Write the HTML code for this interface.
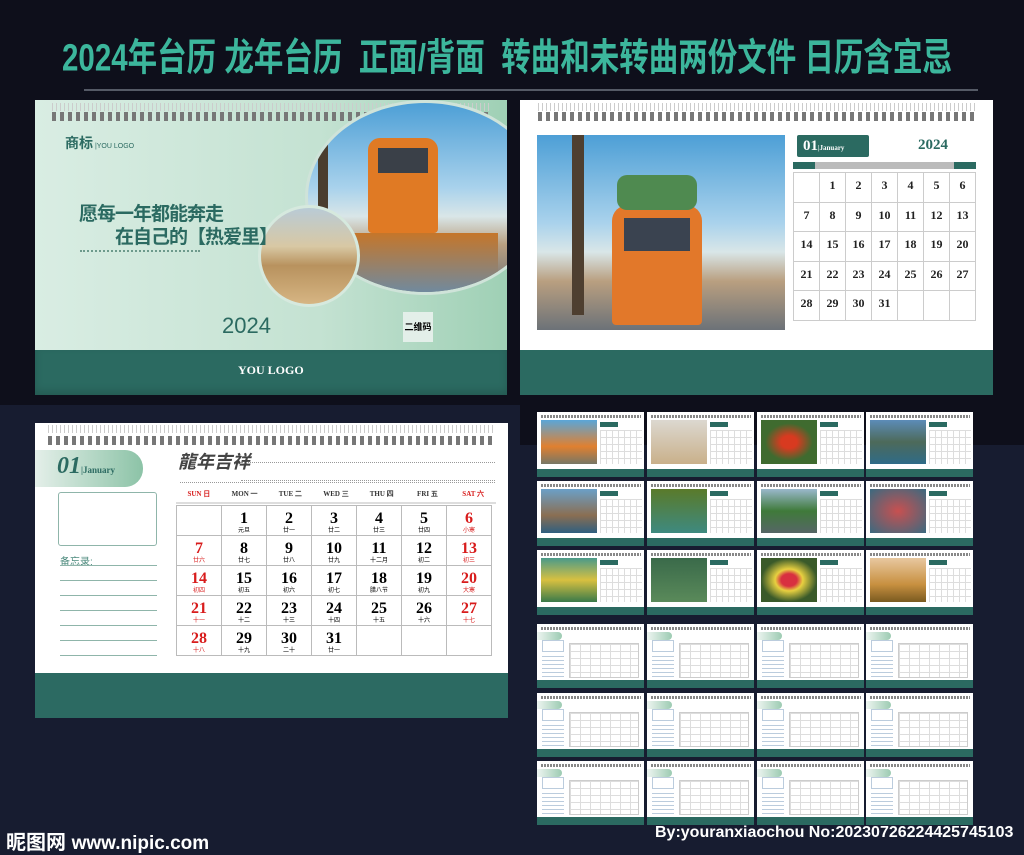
<!DOCTYPE html>
<html><head><meta charset="utf-8">
<style>
*{margin:0;padding:0;box-sizing:border-box}
body{width:1024px;height:854px;overflow:hidden;background:#171c30;font-family:"Liberation Sans","Noto Sans CJK SC",sans-serif;position:relative}
.abs{position:absolute}
.top{left:0;top:0;width:1024px;height:405px;background:#0e0f1b}
.top2{left:520px;top:405px;width:504px;height:40px;background:#0e0f1b}
.title{left:62px;top:38px;font-size:29.5px;line-height:32px;color:#3cb69c;font-weight:bold;white-space:nowrap;transform:scaleY(1.3);transform-origin:left top}
.rule{left:84px;top:89px;width:894px;height:2px;background:#555a66}
.card{position:absolute;background:#fff;overflow:hidden}
.band{position:absolute;left:0;right:0;bottom:0;background:#2b6a61}
.rings{position:absolute;height:9px;background:repeating-linear-gradient(90deg,#777 0 4px,transparent 4px 8px)}
.ringl{position:absolute;height:8px;background:repeating-linear-gradient(90deg,#ccc 0 1px,transparent 1px 4px,#ccc 4px 5px,transparent 5px 8px)}
.sky{background:linear-gradient(180deg,#4d9fd6 0%,#a9d2ec 45%,#d9e6e8 60%,#b99f80 75%,#6c7278 100%)}
table{border-collapse:collapse}
.big td{border:1px solid #bbb;width:45px;height:30px;text-align:center;font-family:"Liberation Serif","Noto Serif CJK SC",serif;font-weight:bold;font-size:16px;line-height:15px;vertical-align:middle;padding-top:2px}
.big td small{display:block;font-size:6px;line-height:7px;font-family:"Noto Sans CJK SC",sans-serif;font-weight:normal}
.r{color:#d81c1c}
.sm td{border:1px solid #ccc;width:26px;height:29.5px;text-align:center;font-family:"Liberation Serif",serif;font-weight:bold;font-size:12px;vertical-align:top;padding-top:5px;color:#222}
.o{color:#c98a2c}
.th{position:absolute;width:107px;height:60px;background:#fff;overflow:hidden}
.foot{color:#fff;font-weight:bold;white-space:nowrap}
</style></head><body>
<div class="abs top"></div><div class="abs top2"></div>
<div class="abs title">2024年台历 龙年台历&nbsp; 正面/背面&nbsp; 转曲和未转曲两份文件 日历含宜忌</div>
<div class="abs rule"></div>

<div class="card" style="left:35px;top:100px;width:472px;height:295px;background:linear-gradient(90deg,#d9ede3,#c4e2d2 60%,#9fd0b5)">
 <div class="ringl" style="left:17px;top:3px;width:440px"></div>
 <div class="rings" style="left:17px;top:12px;width:440px"></div>
 <div class="abs sky" style="left:270px;top:0;width:240px;height:195px;border-radius:50%;border:3px solid #cfe3d9;overflow:hidden">
  <div class="abs" style="left:60px;top:35px;width:70px;height:95px;background:#e07a24;border-radius:12px 12px 4px 4px"></div>
  <div class="abs" style="left:70px;top:45px;width:50px;height:25px;background:#3a4048"></div>
  <div class="abs" style="left:10px;top:0;width:10px;height:120px;background:#4a3d2e"></div>
  <div class="abs" style="left:40px;top:130px;width:150px;height:60px;background:linear-gradient(#c5762a,#6f8aa0)"></div>
 </div>
 <div class="abs" style="left:223px;top:105px;width:102px;height:102px;border-radius:50%;border:3px solid #d6e9de;background:linear-gradient(#b9cbd6,#d8c8a4 40%,#b8925e 60%,#d6b583)"></div>
 <div class="abs" style="left:30px;top:33px;font-size:14px;color:#2b6a61;font-weight:bold">商标<span style="font-size:7px;font-weight:normal"> |YOU LOGO</span></div>
 <div class="abs" style="left:44px;top:99px;font-size:19px;color:#2b6a61;font-weight:bold;letter-spacing:-1px">愿每一年都能奔走</div>
 <div class="abs" style="left:80px;top:122px;font-size:19px;color:#2b6a61;font-weight:bold;letter-spacing:-1px">在自己的【热爱里】</div>
 <div class="abs" style="left:45px;top:150px;width:120px;height:10px;border-top:2px dotted #6d9a8c"></div>
 <div class="abs" style="left:187px;top:213px;font-size:22px;color:#2b6a61">2024</div>
 <div class="abs" style="left:368px;top:212px;width:30px;height:30px;background:#e3efe9;font-size:9px;font-weight:bold;text-align:center;line-height:30px">二维码</div>
 <div class="band" style="height:45px;box-shadow:0 -4px 8px rgba(0,0,0,.15) inset"></div>
 <div class="abs" style="left:203px;top:263px;font-size:12px;color:#fff;font-family:'Liberation Serif',serif;font-weight:bold">YOU LOGO</div>
</div>

<div class="card" style="left:520px;top:100px;width:473px;height:295px">
 <div class="ringl" style="left:18px;top:3px;width:440px"></div>
 <div class="rings" style="left:18px;top:12px;width:440px"></div>
 <div class="abs sky" style="left:17px;top:35px;width:248px;height:195px;overflow:hidden">
  <div class="abs" style="left:75px;top:70px;width:90px;height:120px;background:#e2782a;border-radius:16px 16px 4px 4px"></div>
  <div class="abs" style="left:87px;top:83px;width:66px;height:33px;background:#3a4350"></div>
  <div class="abs" style="left:80px;top:40px;width:80px;height:35px;background:#4f8a50;border-radius:10px"></div>
  <div class="abs" style="left:35px;top:0;width:12px;height:180px;background:#4e3f30"></div>
 </div>
 <div class="abs" style="left:277px;top:35px;width:72px;height:22px;background:#2b6a61;color:#fff;font-family:'Liberation Serif',serif;font-weight:bold;font-size:15px;padding-left:6px;line-height:22px;border-radius:2px">01<span style="font-size:7px">|January</span></div>
 <div class="abs" style="left:398px;top:37px;font-size:15px;font-weight:bold;color:#2b6a61;font-family:'Liberation Serif',serif">2024</div>
 <div class="abs" style="left:273px;top:62px;width:183px;height:7px;background:linear-gradient(90deg,#2b6a61 12%,#bbb 12% 88%,#2b6a61 88%)"></div>
 <table class="sm abs" style="left:273px;top:72px">
  <tr><td></td><td>1</td><td>2</td><td>3</td><td>4</td><td>5</td><td class="o">6</td></tr>
  <tr><td class="o">7</td><td>8</td><td>9</td><td>10</td><td>11</td><td>12</td><td class="o">13</td></tr>
  <tr><td class="o">14</td><td>15</td><td>16</td><td>17</td><td>18</td><td>19</td><td class="o">20</td></tr>
  <tr><td class="o">21</td><td>22</td><td>23</td><td>24</td><td>25</td><td>26</td><td class="o">27</td></tr>
  <tr><td class="o">28</td><td>29</td><td>30</td><td>31</td><td></td><td></td><td></td></tr>
 </table>
 <div class="band" style="height:45px"></div>
</div>

<div class="card" style="left:35px;top:423px;width:473px;height:295px">
 <div class="ringl" style="left:13px;top:2px;width:445px"></div>
 <div class="rings" style="left:13px;top:13px;width:445px"></div>
 <div class="abs" style="left:0;top:27px;width:108px;height:37px;border-radius:0 18px 18px 0;background:linear-gradient(90deg,#e4efe9,#8cc3a7)"></div>
 <div class="abs" style="left:22px;top:30px;font-family:'Liberation Serif',serif;font-weight:bold;font-style:italic;font-size:24px;color:#2b6a61">01<span style="font-size:9px;font-style:normal">|January</span></div>
 <div class="abs" style="left:23px;top:69px;width:99px;height:54px;border:1px solid #8fb5aa;border-radius:3px"></div>
 <div class="abs" style="left:25px;top:130px;font-size:10px;color:#4c8a7d">备忘录:</div>
 <div class="abs" style="left:25px;top:142px;width:97px;height:96px;background:repeating-linear-gradient(180deg,#8fb5aa 0 1px,transparent 1px 15px)"></div>
 <div class="abs" style="left:143px;top:25px;font-size:18px;color:#444;font-weight:bold;font-style:italic">龍年吉祥</div>
 <div class="abs" style="left:206px;top:39px;width:254px;height:19px;border-top:1px dotted #999;border-bottom:1px dotted #999"></div>
 <div class="abs" style="left:145px;top:59px;width:315px;border-top:1px dotted #999"></div>
 <div class="abs" style="left:141px;top:66px;width:320px;display:flex;font-family:'Liberation Serif',serif;font-weight:bold;font-size:7px;color:#333;text-align:center">
  <span style="flex:1;color:#d81c1c">SUN 日</span><span style="flex:1">MON 一</span><span style="flex:1">TUE 二</span><span style="flex:1">WED 三</span><span style="flex:1">THU 四</span><span style="flex:1">FRI 五</span><span style="flex:1;color:#d81c1c">SAT 六</span></div>
 <div class="abs" style="left:141px;top:79px;width:320px;height:2px;background:#ddd"></div>
 <table class="big abs" style="left:141px;top:82px">
  <tr><td></td><td>1<small>元旦</small></td><td>2<small>廿一</small></td><td>3<small>廿二</small></td><td>4<small>廿三</small></td><td>5<small>廿四</small></td><td class="r">6<small>小寒</small></td></tr>
  <tr><td class="r">7<small>廿六</small></td><td>8<small>廿七</small></td><td>9<small>廿八</small></td><td>10<small>廿九</small></td><td>11<small>十二月</small></td><td>12<small>初二</small></td><td class="r">13<small>初三</small></td></tr>
  <tr><td class="r">14<small>初四</small></td><td>15<small>初五</small></td><td>16<small>初六</small></td><td>17<small>初七</small></td><td>18<small>腊八节</small></td><td>19<small>初九</small></td><td class="r">20<small>大寒</small></td></tr>
  <tr><td class="r">21<small>十一</small></td><td>22<small>十二</small></td><td>23<small>十三</small></td><td>24<small>十四</small></td><td>25<small>十五</small></td><td>26<small>十六</small></td><td class="r">27<small>十七</small></td></tr>
  <tr><td class="r">28<small>十八</small></td><td>29<small>十九</small></td><td>30<small>二十</small></td><td>31<small>廿一</small></td><td></td><td></td><td></td></tr>
 </table>
 <div class="band" style="height:45px;background:#2c6a62"></div>
</div>

<div id="thumbs"></div>
<script>
var cols=[537,647,757,866],rowsP=[412,481,550],rowsC=[624,693,761];
var imgs=['linear-gradient(#5aa6d8,#e08030 60%,#776)','linear-gradient(#dcd8d0,#c9b08a)','radial-gradient(#d83a20 20%,#3f6b2f 60%)','linear-gradient(#5c8cb8,#4d6a5a 50%,#2f6b88)','linear-gradient(#6ba0c8,#8a6e52 60%,#2f5f80)','linear-gradient(#5a7a2a,#3e8a80)','linear-gradient(#9ab8cc,#3f7a3a 50%,#566)','radial-gradient(#c85050,#3a6a80)','linear-gradient(#4a9a8a,#d8c040 50%,#3a7a4a)','linear-gradient(#3a6a4a,#5a8a5a)','radial-gradient(#d83040 20%,#e8d040 35%,#3a5a2a 70%)','linear-gradient(#e8c8a0,#c89040 60%,#7a5a20)'];
var h='',k=0;
rowsP.forEach(function(y){cols.forEach(function(x){
h+='<div class="th" style="left:'+x+'px;top:'+y+'px;height:65px"><div class="rings" style="left:4px;top:3px;width:100px;height:3px;background:repeating-linear-gradient(90deg,#888 0 2px,transparent 2px 3px)"></div><div class="abs" style="left:4px;top:8px;width:56px;height:44px;background:'+imgs[k++]+'"></div><div class="abs" style="left:63px;top:10px;width:18px;height:5px;background:#2b6a61"></div><div class="abs" style="left:63px;top:18px;width:42px;height:34px;background:repeating-linear-gradient(90deg,#ddd 0 1px,transparent 1px 6px),repeating-linear-gradient(180deg,#ddd 0 1px,transparent 1px 7px)"></div><div class="abs" style="left:0;top:57px;width:107px;height:10px;background:#2b6a61"></div></div>';});});
rowsC.forEach(function(y){cols.forEach(function(x){
h+='<div class="th" style="left:'+x+'px;top:'+y+'px;height:64px"><div class="rings" style="left:4px;top:3px;width:100px;height:3px;background:repeating-linear-gradient(90deg,#888 0 2px,transparent 2px 3px)"></div><div class="abs" style="left:0;top:8px;width:25px;height:8px;border-radius:0 4px 4px 0;background:linear-gradient(90deg,#eef5f1,#9ccbb2)"></div><div class="abs" style="left:5px;top:16px;width:22px;height:12px;border:1px solid #bcd"></div><div class="abs" style="left:5px;top:32px;width:22px;height:22px;background:repeating-linear-gradient(180deg,#bcd 0 1px,transparent 1px 4px)"></div><div class="abs" style="left:32px;top:19px;width:70px;height:35px;border:1px solid #ccc;background:repeating-linear-gradient(90deg,#ddd 0 1px,transparent 1px 10px),repeating-linear-gradient(180deg,#ddd 0 1px,transparent 1px 7px)"></div><div class="abs" style="left:0;top:56px;width:107px;height:10px;background:#2b6a61"></div></div>';});});
document.getElementById('thumbs').innerHTML=h;
</script>
<div class="abs foot" style="left:6px;top:826px;font-size:20px">昵图网 <span style="font-size:19px">www.nipic.com</span></div>
<div class="abs foot" style="left:655px;top:824px;font-size:16px">By:youranxiaochou No:20230726224425745103</div>
</body></html>
